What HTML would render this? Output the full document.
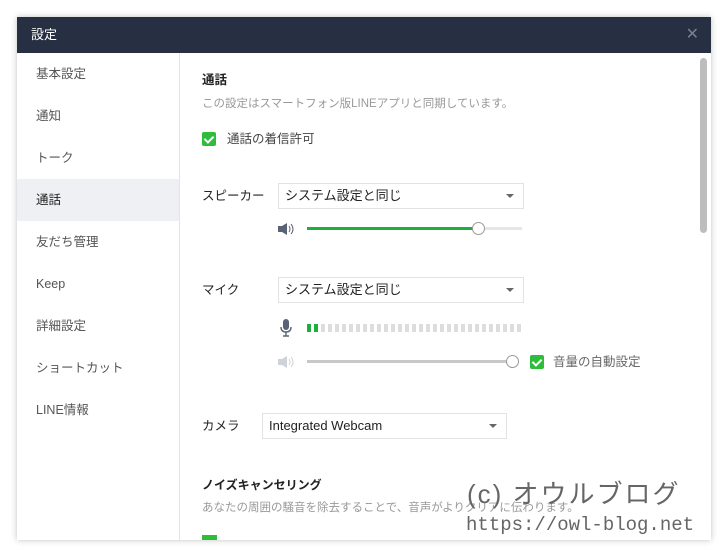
<!DOCTYPE html>
<html><head><meta charset="utf-8"><style>
*{margin:0;padding:0;box-sizing:border-box}
body{width:728px;height:556px;background:#fff;font-family:"Liberation Sans","Noto Sans CJK JP",sans-serif;position:relative;overflow:hidden;color:#333}
.win{position:absolute;left:17px;top:17px;width:694px;height:523px;background:#fff;box-shadow:0 0 6px rgba(0,0,0,.25);overflow:hidden}
.title{height:36px;background:#272f42;color:#fff;font-size:13px;line-height:36px;padding-left:14px}
.x{position:absolute;right:12px;top:0;color:#7a8090;font-size:16px;line-height:36px}
.side{position:absolute;left:0;top:36px;width:163px;bottom:0;border-right:1px solid #e3e3e3}
.side div{height:42px;line-height:42px;padding-left:19px;font-size:12.5px;color:#555}
.side .sel{background:#eef0f4;color:#222}
.a{position:absolute;font-size:12.5px;color:#222;line-height:16px;white-space:nowrap}
.g{color:#999;font-size:11.5px}
.cb{position:absolute;width:14px;height:14px;background:#2ebd3a;border-radius:2px}
.cb:after{content:"";position:absolute;left:4px;top:1.5px;width:4px;height:7px;border:solid #fff;border-width:0 2px 2px 0;transform:rotate(45deg)}
.sel2{position:absolute;height:26px;border:1px solid #e2e2e2;font-size:13px;line-height:24px;padding-left:6px;color:#222}
.sel2:after{content:"";position:absolute;right:9px;top:10px;border:4px solid transparent;border-top:4px solid #666}
</style></head><body>
<div class="win">
<div class="title">設定<span class="x">✕</span></div>
<div class="side">
<div>基本設定</div><div>通知</div><div>トーク</div><div class="sel">通話</div><div>友だち管理</div><div>Keep</div><div>詳細設定</div><div>ショートカット</div><div>LINE情報</div>
</div>
<div style="position:absolute;left:683px;top:41px;width:7px;height:175px;background:#bdbdbd;border-radius:4px"></div>
</div>
<div class="a" style="left:202px;top:72px;font-weight:bold">通話</div>
<div class="a g" style="left:202px;top:96px">この設定はスマートフォン版LINEアプリと同期しています。</div>
<div class="cb" style="left:202px;top:132px"></div>
<div class="a" style="left:227px;top:131px;color:#444">通話の着信許可</div>
<div class="a" style="left:202px;top:188px">スピーカー</div>
<div class="sel2" style="left:278px;top:183px;width:246px">システム設定と同じ</div>
<svg style="position:absolute;left:276px;top:222px" width="20" height="14"><path d="M2 4h4l5-3v12l-5-3H2z" fill="#5a6275"/><path d="M13 4q2 3 0 6M15 2q4 5 0 10" stroke="#5a6275" fill="none"/></svg>
<div style="position:absolute;left:307px;top:227px;width:215px;height:3px;background:#e6e6e6"></div>
<div style="position:absolute;left:307px;top:227px;width:172px;height:3px;background:#1fae3b"></div>
<div style="position:absolute;left:472px;top:222px;width:13px;height:13px;border-radius:50%;background:#fff;border:1px solid #999"></div>
<div class="a" style="left:202px;top:282px">マイク</div>
<div class="sel2" style="left:278px;top:277px;width:246px">システム設定と同じ</div>
<svg style="position:absolute;left:279px;top:318px" width="14" height="20"><rect x="4" y="1" width="6" height="11" rx="3" fill="#5a6275"/><path d="M2 9q0 5 5 5q5 0 5-5M7 14v4M4 18h6" stroke="#5a6275" fill="none" stroke-width="1.4"/></svg>
<div style="position:absolute;left:307px;top:324px;width:215px;height:8px;background:repeating-linear-gradient(90deg,#ddd 0 4px,transparent 4px 7px)"></div>
<div style="position:absolute;left:307px;top:324px;width:11px;height:8px;background:repeating-linear-gradient(90deg,#1fae3b 0 4px,transparent 4px 7px)"></div>
<svg style="position:absolute;left:276px;top:355px" width="20" height="14"><path d="M2 4h4l5-3v12l-5-3H2z" fill="#cfd2d8"/><path d="M13 4q2 3 0 6M15 2q4 5 0 10" stroke="#cfd2d8" fill="none"/></svg>
<div style="position:absolute;left:307px;top:360px;width:205px;height:3px;background:#c8c8c8"></div>
<div style="position:absolute;left:506px;top:355px;width:13px;height:13px;border-radius:50%;background:#fff;border:1px solid #999"></div>
<div class="cb" style="left:530px;top:355px"></div>
<div class="a" style="left:553px;top:354px;color:#666">音量の自動設定</div>
<div class="a" style="left:202px;top:418px">カメラ</div>
<div class="sel2" style="left:262px;top:413px;width:245px">Integrated Webcam</div>
<div class="a" style="left:202px;top:477px;font-weight:bold;font-size:12px">ノイズキャンセリング</div>
<div class="a g" style="left:202px;top:500px">あなたの周囲の騒音を除去することで、音声がよりクリアに伝わります。</div>
<div style="position:absolute;left:202px;top:535px;width:15px;height:5px;background:#2ebd3a"></div>
<div style="position:absolute;left:467px;top:478px;font-size:26px;line-height:32px;color:#666;letter-spacing:2px;white-space:nowrap">(c) オウルブログ</div>
<div style="position:absolute;left:466px;top:512px;font-size:19px;line-height:26px;color:#666;font-family:'Liberation Mono',monospace;white-space:nowrap">https://owl-blog.net</div>
</body></html>
